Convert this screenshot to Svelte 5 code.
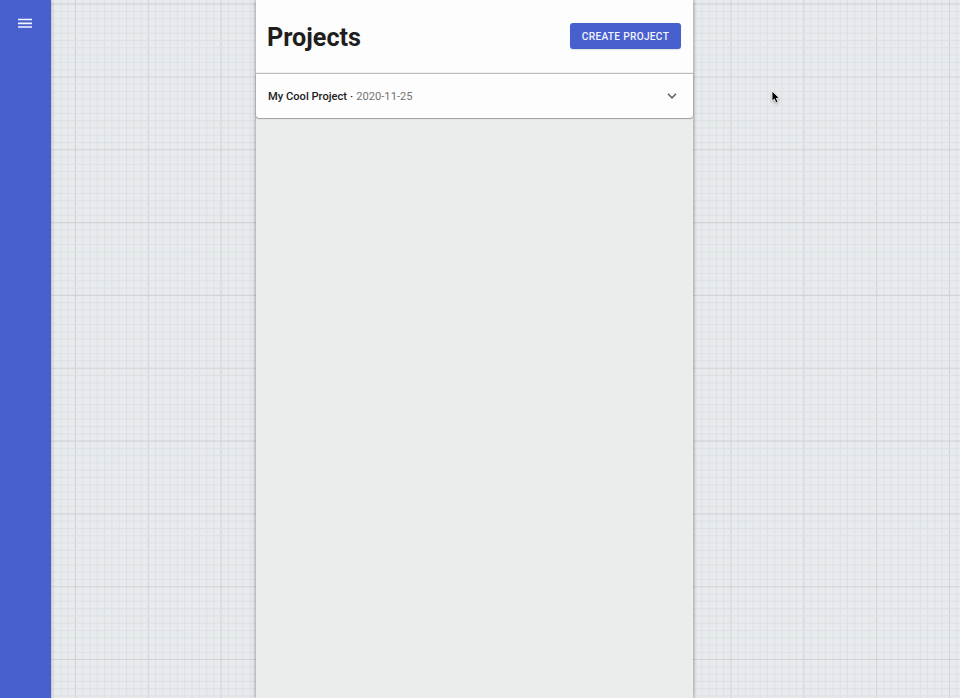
<script>
  const MAJOR = 72.83;
  const MINOR = MAJOR / 10;
  const vertical = [];
  const horizontal = [];
  for (let i = -10; i < 125; i++) {
    vertical.push({ at: 75.5 + i * MINOR, major: i % 10 === 0 });
    horizontal.push({ at: 4.1 + i * MINOR, major: i % 10 === 0 });
  }
  const projects = [{ name: 'My Cool Project', date: '2020-11-25' }];
</script>

<div class="app">
  <svg class="paper" width="960" height="698" aria-hidden="true">
    {#each vertical as line}
      <line class:major={line.major} x1={line.at} x2={line.at} y1="0" y2="698" />
    {/each}
    {#each horizontal as line}
      <line class:major={line.major} x1="0" x2="960" y1={line.at} y2={line.at} />
    {/each}
  </svg>

  <nav class="rail">
    <button class="menu" aria-label="Menu">
      <svg width="14" height="10" viewBox="0 0 14 10">
        <path d="M0 1.5h14M0 5.3h14M0 9h14" stroke="#f4f6ff" stroke-width="1.7" />
      </svg>
    </button>
  </nav>

  <main class="panel">
    <header>
      <h1>Projects</h1>
      <button class="create">CREATE PROJECT</button>
    </header>
    {#each projects as project}
      <section class="project">
        <p><b>{project.name}</b><span class="dot">·</span><span>{project.date}</span></p>
        <svg width="10" height="6" viewBox="0 0 10 6">
          <path d="M1 .8l4 4 4-4" fill="none" stroke="#646464" stroke-width="1.6" />
        </svg>
      </section>
    {/each}
  </main>

  <svg class="cursor" width="12" height="16" viewBox="0 0 12 16">
    <path d="M1 1v10.2l2.3-2.1 1.7 3.8 2-.9-1.7-3.7h3.2z" fill="#000" stroke="#fff" stroke-width=".8" />
  </svg>
</div>

<style>
  :global(body) {
    margin: 0;
    overflow: hidden;
  }
  .app {
    position: relative;
    display: flex;
    width: 960px;
    height: 698px;
    overflow: hidden;
    background: #e8ebee;
    font-family: Roboto, sans-serif;
  }
  .paper {
    position: absolute;
    inset: 0;
  }
  line {
    stroke: #dce0e4;
    stroke-width: 1;
  }
  line.major {
    stroke: #d0d4d7;
    stroke-width: 1.1;
  }
  button {
    border: 0;
    padding: 0;
    font-family: inherit;
  }
  .rail {
    position: relative;
    box-sizing: border-box;
    flex: none;
    width: 51px;
    padding: 18px 0 0 18px;
    background: #485fce;
    box-shadow: 0 0 3px rgba(0, 0, 0, 0.35);
  }
  .menu {
    display: block;
    width: 14px;
    height: 10px;
    background: none;
  }
  .menu svg {
    display: block;
  }
  .panel {
    position: relative;
    flex: none;
    width: 437px;
    margin-left: 205px;
    background: #ebecec;
    box-shadow: 0 0 4px rgba(0, 0, 0, 0.45);
  }
  header {
    display: flex;
    align-items: center;
    justify-content: space-between;
    box-sizing: border-box;
    height: 73px;
    padding: 0 12px 1px 11px;
    background: #fdfdfd;
  }
  h1 {
    margin: 3px 0 0;
    font-size: 25.2px;
    font-weight: 700;
    line-height: 34px;
    color: #1e1e1e;
  }
  .create {
    width: 111px;
    height: 26px;
    border-radius: 3px;
    background: #485fce;
    color: #f2f4ff;
    font-size: 10.2px;
    font-weight: 500;
    letter-spacing: 0.27px;
    box-shadow: 0 1px 1px rgba(0, 0, 0, 0.12);
  }
  .project {
    display: flex;
    align-items: center;
    justify-content: space-between;
    box-sizing: border-box;
    height: 45px;
    padding: 0 16px 0 12px;
    border-top: 1px solid #bdbdbd;
    border-radius: 0 0 3px 3px;
    background: #fdfdfd;
    box-shadow: 0 0 1px rgba(0, 0, 0, 0.5), 0 1px 1px rgba(0, 0, 0, 0.3);
  }
  p {
    margin: 1px 0 0;
    font-size: 11.15px;
    color: #737373;
  }
  b {
    font-weight: 500;
    color: #222;
  }
  .dot {
    margin: 0 3.2px 0 2.9px;
    color: #222;
    font-weight: 500;
  }
  .cursor {
    position: absolute;
    left: 771px;
    top: 90px;
    filter: drop-shadow(0 1px 1px rgba(0, 0, 0, 0.3));
  }
</style>
